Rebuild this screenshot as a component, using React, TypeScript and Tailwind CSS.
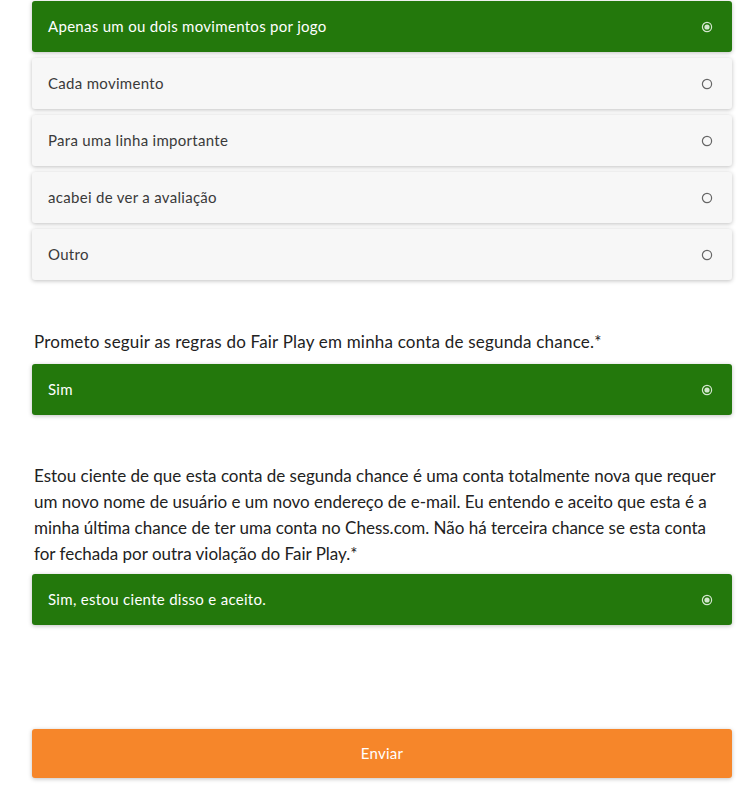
import React from "react";

function Radio({ selected }: { selected: boolean }) {
  return selected ? (
    <svg width="12" height="12" viewBox="0 0 12 12">
      <circle cx="6" cy="6" r="4.6" fill="none" stroke="#d4e6cf" strokeWidth="1.2" />
      <circle cx="6" cy="6" r="2.6" fill="#d4e6cf" />
    </svg>
  ) : (
    <svg width="12" height="12" viewBox="0 0 12 12">
      <circle cx="6" cy="6" r="4.6" fill="none" stroke="#666" strokeWidth="1.2" />
    </svg>
  );
}

function Option({ label, selected }: { label: string; selected?: boolean }) {
  return (
    <div
      className={
        "flex h-[51px] items-center justify-between rounded-[3px] pl-4 pr-[19px] text-[15px] tracking-[0.3px] shadow-[0_1px_4px_rgba(0,0,0,0.25)] " +
        (selected ? "bg-[#23780c] text-white" : "bg-[#f7f7f7] text-[#3a3a3a]")
      }
    >
      <span>{label}</span>
      <Radio selected={!!selected} />
    </div>
  );
}

export default function App() {
  return (
    <div className="min-h-[791px] bg-white pl-8 pr-[21px] pt-px" style={{ fontFamily: "Lato, 'Open Sans', sans-serif" }}>
      <div className="flex flex-col gap-[6px]">
        <Option label="Apenas um ou dois movimentos por jogo" selected />
        <Option label="Cada movimento" />
        <Option label="Para uma linha importante" />
        <Option label="acabei de ver a avaliação" />
        <Option label="Outro" />
      </div>

      <p className="mt-[49px] mb-[9px] pl-[2px] text-[17px] leading-[26px] tracking-[0.2px] text-[#222]">
        Prometo seguir as regras do Fair Play em minha conta de segunda chance.*
      </p>
      <Option label="Sim" selected />

      <p className="mt-[48px] mb-[7px] whitespace-nowrap pl-[2px] text-[17px] leading-[26px] text-[#222]">
        Estou ciente de que esta conta de segunda chance é uma conta totalmente nova que requer
        <br />
        um novo nome de usuário e um novo endereço de e-mail. Eu entendo e aceito que esta é a
        <br />
        minha última chance de ter uma conta no Chess.com. Não há terceira chance se esta conta
        <br />
        for fechada por outra violação do Fair Play.*
      </p>
      <Option label="Sim, estou ciente disso e aceito." selected />

      <button className="mt-[104px] flex h-[49px] w-full items-center justify-center rounded-[3px] bg-[#f6862a] text-[15px] tracking-[0.3px] text-white shadow-[0_1px_4px_rgba(0,0,0,0.25)]">
        Enviar
      </button>
    </div>
  );
}
